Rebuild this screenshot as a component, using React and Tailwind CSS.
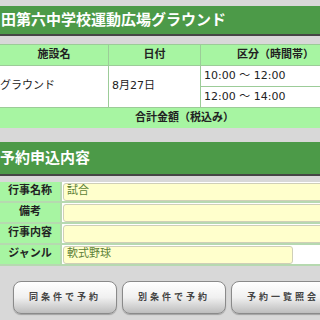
import React from "react";

// palette picked from the screenshot
const font = "font-['DejaVu_Sans','Noto_Sans_CJK_JP',sans-serif]";

function Heading({ children, className = "" }) {
  return (
    <div className={`flex items-center bg-[#4c9a48] border-b-2 border-[#454545] text-white font-bold text-[15px] leading-none whitespace-nowrap ${className}`}>
      {children}
    </div>
  );
}

function FormRow({ label, value, short }) {
  return (
    <div className="flex h-[21px] border-b-2 border-[#b6d9b0]">
      <div className="w-[62px] shrink-0 flex items-center justify-center bg-[#a7f5a2] border-r-2 border-[#b6d9b0] text-[11px] font-bold text-[#222]">
        {label}
      </div>
      <div className="flex-1 flex items-center bg-white pl-[1px]">
        <div className={`h-[18px] ${short ? "w-[230px]" : "w-[300px]"} rounded-[3px] border border-[#cfcfb8] bg-[#ffffcc] flex items-center px-[3px] text-[11px] text-[#5d7f36] whitespace-nowrap`}>
          {value}
        </div>
      </div>
    </div>
  );
}

function Btn({ children }) {
  return (
    <button className="w-[104px] h-[33px] shrink-0 rounded-[8px] border border-[#8a8a8a] bg-gradient-to-b from-white via-[#f0f0f0] to-[#bdbdbd] shadow-[0_1px_1px_rgba(0,0,0,0.25)] text-[9px] font-bold text-[#444] tracking-[3px] whitespace-nowrap">
      {children}
    </button>
  );
}

export default function App() {
  return (
    <div className={`w-[320px] h-[320px] overflow-hidden bg-[#d8d8d8] ${font}`}>
      <Heading className="mt-[6px] h-[30px] pl-[1px]">田第六中学校運動広場グラウンド</Heading>

      <div className="mt-[8px] w-[350px] border-t border-[#9ccc98] bg-[#9ccc98] grid grid-cols-[108px_91px_1fr] gap-[1px] text-[11px] text-[#222]">
        <div className="h-[20px] bg-[#a7f5a2] flex items-center justify-center font-bold">施設名</div>
        <div className="h-[20px] bg-[#a7f5a2] flex items-center justify-center font-bold">日付</div>
        <div className="h-[20px] bg-[#a7f5a2] flex items-center justify-center font-bold">区分（時間帯）</div>

        <div className="row-span-2 bg-white flex items-center whitespace-nowrap">グラウンド</div>
        <div className="row-span-2 bg-white flex items-center pl-[3px]">8月27日</div>
        <div className="h-[20px] bg-white flex items-center pl-[3px]">10:00 ～ 12:00</div>
        <div className="h-[20px] bg-white flex items-center pl-[3px]">12:00 ～ 14:00</div>

        <div className="col-span-3 h-[20px] bg-[#a7f5a2] flex items-center pl-[135px] font-bold">合計金額（税込み）</div>
      </div>

      <Heading className="mt-[14px] h-[34px]">予約申込内容</Heading>

      <div className="mt-[6px]">
        <FormRow label="行事名称" value="試合" />
        <FormRow label="備考" value="" />
        <FormRow label="行事内容" value="" />
        <FormRow label="ジャンル" value="軟式野球" short />
      </div>

      <div className="mt-[15px] pl-[13px] flex gap-[5px]">
        <Btn>同条件で予約</Btn>
        <Btn>別条件で予約</Btn>
        <Btn>予約一覧照会</Btn>
      </div>
    </div>
  );
}
